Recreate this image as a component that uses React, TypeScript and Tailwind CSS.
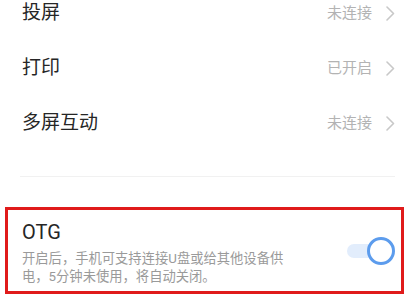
const rows = [
  { title: "投屏", status: "未连接" },
  { title: "打印", status: "已开启" },
  { title: "多屏互动", status: "未连接" },
];

const Chevron = () => (
  <svg width="9" height="15" viewBox="0 0 9 15" fill="none">
    <path d="M1 1 L7.5 7.5 L1 14" stroke="#c8c8c8" strokeWidth="1.6" strokeLinecap="round" strokeLinejoin="round" />
  </svg>
);

const Toggle = () => (
  <div className="relative w-[48px] h-[28px] shrink-0">
    <div className="absolute left-0 top-[7px] w-[40px] h-[14px] rounded-full bg-[#e2edfc]" />
    <div className="absolute right-0 top-0 w-[28px] h-[28px] rounded-full border-[3px] border-[#5c9ced] bg-white" />
  </div>
);

export default function App() {
  return (
    <div
      className="w-[418px] h-[303px] bg-white overflow-hidden"
      style={{ fontFamily: 'Roboto, "Noto Sans CJK SC", sans-serif' }}
    >
      <div className="-mt-[14px]">
        {rows.map((r, i) => (
          <div key={i} className="h-[55px] flex items-center justify-between pl-[22px] pr-[23px]">
            <span className="text-[19px] text-[#262626]">{r.title}</span>
            <div className="flex items-center gap-[14px]">
              <span className="text-[15px] text-[#b3b3b3]">{r.status}</span>
              <Chevron />
            </div>
          </div>
        ))}
      </div>

      <div className="mt-[25px] ml-[20px] mr-[23px] h-px bg-[#f1f1f1]" />

      <div className="mt-[30px] ml-[5px] w-[399px] h-[87px] border-[3px] border-[#e01b1b] flex items-center justify-between pl-[14px] pr-[6px]">
        <div className="self-start pt-[10px]">
          <div className="text-[20px] leading-[24px] text-[#262626]">OTG</div>
          <p className="mt-[6px] w-[262px] text-[13.3px] leading-[18px] text-[#9a9a9a]">
            开启后，手机可支持连接U盘或给其他设备供电，5分钟未使用，将自动关闭。
          </p>
        </div>
        <Toggle />
      </div>
    </div>
  );
}
